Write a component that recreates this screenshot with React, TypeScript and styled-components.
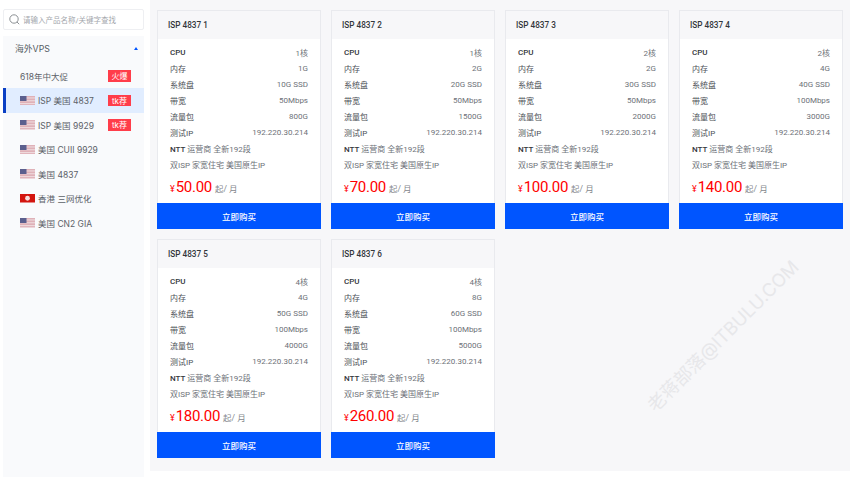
import React from 'react';
import styled, { createGlobalStyle } from 'styled-components';

const cjk = '"Noto Sans CJK SC", sans-serif';

const GlobalStyle = createGlobalStyle`
  html, body { margin: 0; padding: 0; background: #fff; }
  body { width: 850px; height: 477px; overflow: hidden; font-family: Roboto, ${cjk}; }
  * { box-sizing: border-box; }
`;

const Page = styled.div`
  display: flex;
  height: 477px;
  padding-left: 3px;
`;

const Sidebar = styled.aside`
  width: 141px;
  padding-top: 9px;
  flex: none;
`;

const Search = styled.div`
  display: flex;
  align-items: center;
  gap: 3px;
  height: 21px;
  padding-left: 5px;
  border: 1px solid #eeeff2;
  border-radius: 2px;
  font-size: 7.5px;
  color: #a4a7ad;
`;

const Menu = styled.nav`
  margin-top: 6px;
  height: 441px;
  background: #f9fafc;
`;

const MenuTitle = styled.div`
  display: flex;
  align-items: center;
  justify-content: space-between;
  height: 24px;
  margin-bottom: 3.7px;
  padding: 0 6px 0 12px;
  font: 8.8px Inter, ${cjk};
  color: #555a62;
`;

const Caret = styled.span`
  width: 0;
  height: 0;
  border-left: 2.5px solid transparent;
  border-right: 2.5px solid transparent;
  border-bottom: 3px solid #0055ff;
`;

const MenuItem = styled.div<{ $active?: boolean }>`
  display: flex;
  align-items: center;
  gap: 3px;
  height: 24.5px;
  padding-left: ${(p) => (p.$active ? '14px' : '17px')};
  padding-right: 13px;
  font: 8.5px Inter, ${cjk};
  color: #5c6168;
  white-space: nowrap;
  background: ${(p) => (p.$active ? '#e1edff' : 'transparent')};
  border-left: ${(p) => (p.$active ? '3px solid #0a3fc4' : '0')};
`;

const ItemLabel = styled.span`
  flex: 1;
`;

const Badge = styled.span`
  display: flex;
  align-items: center;
  justify-content: center;
  width: 23px;
  height: 11.5px;
  background: #ff3d4a;
  color: #fff;
  font: 8px Inter, ${cjk};
`;

const Main = styled.main`
  width: 700px;
  margin-left: 6px;
  height: 471px;
  padding: 10px 0 0 7px;
  background: #f7f7f9;
  position: relative;
  overflow: hidden;
`;

const Grid = styled.div`
  display: grid;
  grid-template-columns: repeat(4, 164px);
  grid-auto-rows: 219px;
  gap: 10px;
`;

const Card = styled.article`
  display: flex;
  flex-direction: column;
  background: #fff;
  border: 1px solid #e9eaee;
  border-bottom: 0;
`;

const CardHead = styled.div`
  height: 28px;
  flex: none;
  padding: 0 0 0 10px;
  display: flex;
  align-items: center;
  background: #f7f7f9;
  font-size: 8.2px;
  font-weight: 500;
  color: #33363b;
`;

const Specs = styled.div`
  padding: 5px 12px 0 12px;
  flex: 1;
`;

const Row = styled.div`
  display: flex;
  justify-content: space-between;
  align-items: center;
  height: 16px;
  font-size: 8px;
  color: #6d7178;
  white-space: nowrap;
`;

const Key = styled.span`
  color: #4c5056;
`;

const Strong = styled.b`
  font-weight: 500;
  color: #33363b;
`;

const Price = styled.div`
  display: flex;
  align-items: baseline;
  margin-top: 6px;
  height: 24px;
  font-size: 8.5px;
  color: #84878d;
`;

const Yen = styled.span`
  color: #ff0000;
  font-size: 9px;
  margin-right: 1px;
`;

const Amount = styled.span`
  color: #ff0000;
  font-size: 15px;
  letter-spacing: -0.3px;
  margin-right: 3px;
`;

const BuyButton = styled.button`
  height: 26px;
  flex: none;
  margin: 0 -1px;
  border: 0;
  background: #0055ff;
  color: #fff;
  font: 500 8.5px ${cjk};
`;

const Watermark = styled.div`
  position: absolute;
  left: 472px;
  top: 322px;
  width: 200px;
  display: flex;
  justify-content: center;
  transform: rotate(-45deg);
  font: 18.3px Inter, ${cjk};
  color: #e7e7ea;
  white-space: nowrap;
`;

const UsFlag = () => (
  <svg width="15" height="9.5" viewBox="0 0 15 9.5">
    <rect width="15" height="9.5" fill="#dfb1b8" />
    <rect y="1.4" width="15" height="1.1" fill="#eed9dc" />
    <rect y="4.2" width="15" height="1.1" fill="#eed9dc" />
    <rect y="7" width="15" height="1.1" fill="#eed9dc" />
    <rect width="6.5" height="5" fill="#5b5f8e" />
  </svg>
);

const HkFlag = () => (
  <svg width="15" height="8.5" viewBox="0 0 15 8.5">
    <rect width="15" height="8.5" fill="#d3150f" />
    <circle cx="7.5" cy="4.25" r="2.4" fill="#f7dede" />
  </svg>
);

const SearchIcon = () => (
  <svg width="11" height="11" viewBox="0 0 11 11" fill="none" stroke="#7f8388" strokeWidth="0.9">
    <circle cx="5" cy="5" r="4.2" />
    <path d="M8 8l2.2 2.2" />
  </svg>
);

const menu = [
  { label: '618年中大促', badge: '火爆' },
  { flag: 'us', label: 'ISP 美国 4837', badge: 'tk荐', active: true },
  { flag: 'us', label: 'ISP 美国 9929', badge: 'tk荐' },
  { flag: 'us', label: '美国 CUII 9929' },
  { flag: 'us', label: '美国 4837' },
  { flag: 'hk', label: '香港 三网优化' },
  { flag: 'us', label: '美国 CN2 GIA' },
];

const plans = [
  { n: 1, cpu: '1核', ram: '1G', disk: '10G SSD', bw: '50Mbps', traffic: '800G', price: '50.00' },
  { n: 2, cpu: '1核', ram: '2G', disk: '20G SSD', bw: '50Mbps', traffic: '1500G', price: '70.00' },
  { n: 3, cpu: '2核', ram: '2G', disk: '30G SSD', bw: '50Mbps', traffic: '2000G', price: '100.00' },
  { n: 4, cpu: '2核', ram: '4G', disk: '40G SSD', bw: '100Mbps', traffic: '3000G', price: '140.00' },
  { n: 5, cpu: '4核', ram: '4G', disk: '50G SSD', bw: '100Mbps', traffic: '4000G', price: '180.00' },
  { n: 6, cpu: '4核', ram: '8G', disk: '60G SSD', bw: '100Mbps', traffic: '5000G', price: '260.00' },
];

export default function App() {
  return (
    <Page>
      <GlobalStyle />
      <Sidebar>
        <Search>
          <SearchIcon />
          请输入产品名称/关键字查找
        </Search>
        <Menu>
          <MenuTitle>
            海外VPS
            <Caret />
          </MenuTitle>
          {menu.map((m) => (
            <MenuItem key={m.label} $active={m.active}>
              {m.flag === 'us' && <UsFlag />}
              {m.flag === 'hk' && <HkFlag />}
              <ItemLabel>{m.label}</ItemLabel>
              {m.badge && <Badge>{m.badge}</Badge>}
            </MenuItem>
          ))}
        </Menu>
      </Sidebar>
      <Main>
        <Grid>
          {plans.map((p) => (
            <Card key={p.n}>
              <CardHead>ISP 4837 {p.n}</CardHead>
              <Specs>
                <Row><Strong>CPU</Strong><span>{p.cpu}</span></Row>
                <Row><Key>内存</Key><span>{p.ram}</span></Row>
                <Row><Key>系统盘</Key><span>{p.disk}</span></Row>
                <Row><Key>带宽</Key><span>{p.bw}</span></Row>
                <Row><Key>流量包</Key><span>{p.traffic}</span></Row>
                <Row><Key>测试IP</Key><span>192.220.30.214</span></Row>
                <Row><span><Strong>NTT</Strong> 运营商 全新192段</span></Row>
                <Row><span>双ISP 家宽住宅 美国原生IP</span></Row>
                <Price>
                  <Yen>¥</Yen>
                  <Amount>{p.price}</Amount>
                  起/ 月
                </Price>
              </Specs>
              <BuyButton>立即购买</BuyButton>
            </Card>
          ))}
        </Grid>
        <Watermark>老蒋部落@ITBULU.COM</Watermark>
      </Main>
    </Page>
  );
}
